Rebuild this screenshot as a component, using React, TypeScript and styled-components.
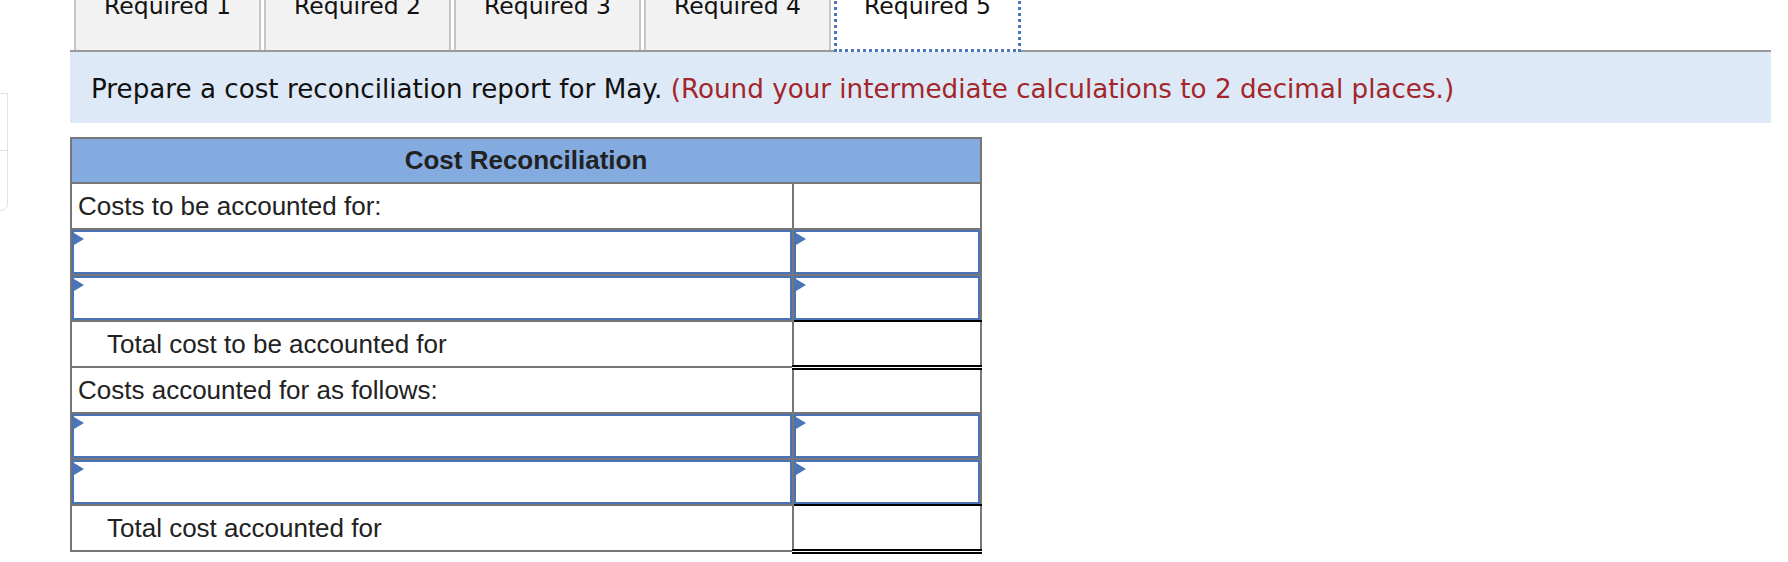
import React from 'react';
import styled, { createGlobalStyle, css } from 'styled-components';

const GlobalStyle = createGlobalStyle`
  html, body {
    margin: 0;
    padding: 0;
    background: #fff;
  }
  body {
    overflow: hidden;
  }
`;

const Page = styled.div`
  padding: 0 17px 0 70px;
  font-family: "DejaVu Sans", Verdana, sans-serif;
`;

// clipped side widget peeking in from the left edge
const SideDock = styled.div`
  position: fixed;
  left: -12px;
  top: 93px;
  width: 18px;
  height: 116px;
  border: 1px solid #e2e2e2;
  border-radius: 0 0 7px 0;
  background: #fff;

  div {
    height: 56px;
    border-bottom: 1px solid #e2e2e2;
  }
`;

const TabBar = styled.div`
  display: flex;
  height: 62px;
  margin-top: -12px;
  padding-left: 4px;
  border-bottom: 2px solid #9a9a9a;
`;

const Tab = styled.div<{ $active?: boolean }>`
  box-sizing: border-box;
  width: 187px;
  height: 100%;
  margin-right: 3px;
  padding-top: 4px;
  border-left: 2px solid #c6c6c6;
  border-right: 2px solid #c6c6c6;
  background: #f2f2f2;
  color: #111;
  font-size: 23.5px;
  text-align: center;
  white-space: nowrap;

  ${({ $active }) =>
    $active &&
    css`
      height: calc(100% + 2px);
      margin-bottom: -2px;
      background: #fff;
      border: 3px dotted #4a77c0;
      border-top: none;
    `}
`;

const Prompt = styled.div`
  padding: 22px 21px 19px;
  background: #dee9f7;
  color: #111;
  font-size: 26.2px;
  white-space: nowrap;

  span {
    color: #a3262a;
  }
`;

const Sheet = styled.table`
  margin-top: 14px;
  width: 912px;
  border-collapse: collapse;
  table-layout: fixed;
  font-family: "Liberation Sans", Arial, sans-serif;
  font-size: 26px;
  color: #222;

  tr {
    height: 46px;
  }
`;

const HeadCell = styled.th`
  height: 43px;
  padding: 0;
  border: 2px solid #777;
  background: #84abe0;
  font-weight: bold;
  text-align: center;
`;

const Cell = styled.td<{ $indent?: boolean; $total?: boolean; $ruleBelow?: boolean; $entry?: boolean }>`
  padding: 0 0 0 ${({ $indent, $entry }) => ($entry ? '0' : $indent ? '35px' : '6px')};
  border: 2px solid #777;
  vertical-align: middle;
  white-space: nowrap;

  ${({ $total }) =>
    $total &&
    css`
      border-top: 2px solid #000;
      border-bottom: 5px double #000;
    `}

  ${({ $ruleBelow }) =>
    $ruleBelow &&
    css`
      border-bottom-color: #000;
    `}
`;

const InputBox = styled.div`
  position: relative;
  box-sizing: border-box;
  height: 44px;
  border: 2px solid #4a73b6;
  background: #fff;
`;

// small dropdown marker in the corner of each entry cell
const Marker = styled.span`
  position: absolute;
  left: 0;
  top: 1px;
  width: 0;
  height: 0;
  border-top: 6px solid transparent;
  border-bottom: 6px solid transparent;
  border-left: 10px solid #4a76b8;
`;

const Entry = ({ ruleBelow }: { ruleBelow?: boolean }) => (
  <tr>
    <Cell $entry>
      <InputBox>
        <Marker />
      </InputBox>
    </Cell>
    <Cell $entry $ruleBelow={ruleBelow}>
      <InputBox>
        <Marker />
      </InputBox>
    </Cell>
  </tr>
);

const tabs = ['Required 1', 'Required 2', 'Required 3', 'Required 4', 'Required 5'];

export default function App() {
  return (
    <>
      <GlobalStyle />
      <SideDock>
        <div />
      </SideDock>
      <Page>
        <TabBar>
          {tabs.map((t, i) => (
            <Tab key={t} $active={i === tabs.length - 1}>
              {t}
            </Tab>
          ))}
        </TabBar>
        <Prompt>
          Prepare a cost reconciliation report for May.{' '}
          <span>(Round your intermediate calculations to 2 decimal places.)</span>
        </Prompt>
        <Sheet>
          <colgroup>
            <col style={{ width: 722 }} />
            <col />
          </colgroup>
          <thead>
            <tr style={{ height: 45 }}>
              <HeadCell colSpan={2}>Cost Reconciliation</HeadCell>
            </tr>
          </thead>
          <tbody>
            <tr>
              <Cell>Costs to be accounted for:</Cell>
              <Cell />
            </tr>
            <Entry />
            <Entry ruleBelow />
            <tr>
              <Cell $indent>Total cost to be accounted for</Cell>
              <Cell $total />
            </tr>
            <tr>
              <Cell>Costs accounted for as follows:</Cell>
              <Cell />
            </tr>
            <Entry />
            <Entry ruleBelow />
            <tr>
              <Cell $indent>Total cost accounted for</Cell>
              <Cell $total />
            </tr>
          </tbody>
        </Sheet>
      </Page>
    </>
  );
}
